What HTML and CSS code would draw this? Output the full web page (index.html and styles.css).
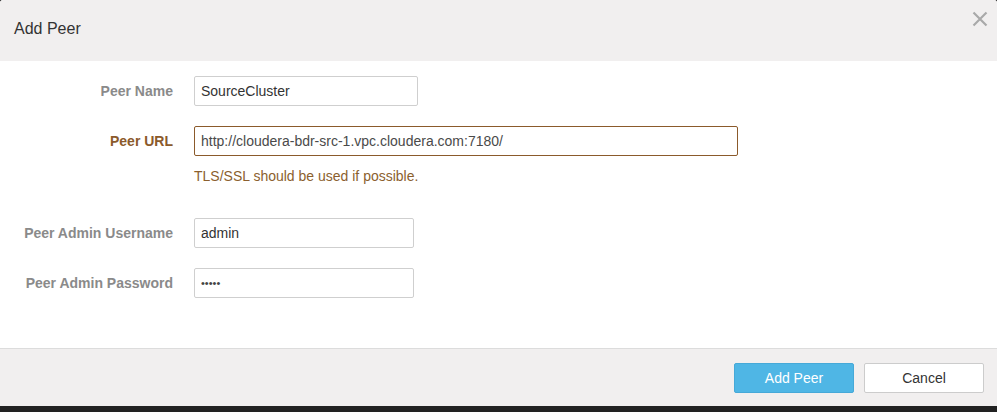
FILE: index.html
```html
<!DOCTYPE html>
<html>
<head>
<meta charset="utf-8">
<link rel="stylesheet" href="styles.css">
</head>
<body>
<div class="modal">
  <div class="modal-header">
    <h3 class="title">Add Peer</h3>
    <button class="close" aria-label="Close">
      <svg width="16" height="16" viewBox="0 0 16 16"><path d="M1.5 1.5 L14.5 14.5 M14.5 1.5 L1.5 14.5" stroke="#a9a9a9" stroke-width="2.2" fill="none"/></svg>
    </button>
  </div>
  <div class="modal-body">
    <div class="row">
      <label class="label">Peer Name</label>
      <div class="control"><input class="input w224" type="text" value="SourceCluster"></div>
    </div>
    <div class="row warn">
      <label class="label">Peer URL</label>
      <div class="control"><input class="input w544" type="text" value="http://cloudera-bdr-src-1.vpc.cloudera.com:7180/"></div>
    </div>
    <div class="help">TLS/SSL should be used if possible.</div>
    <div class="row gap-lg">
      <label class="label">Peer Admin Username</label>
      <div class="control"><input class="input w220" type="text" value="admin"></div>
    </div>
    <div class="row">
      <label class="label">Peer Admin Password</label>
      <div class="control"><input class="input w220 pw" type="password" value="admin"></div>
    </div>
  </div>
  <div class="modal-footer">
    <button class="btn btn-primary">Add Peer</button>
    <button class="btn btn-default">Cancel</button>
  </div>
</div>
</body>
</html>
```
FILE: styles.css
```css
html, body {
  margin: 0;
  padding: 0;
  background: #222;
  font-family: "Liberation Sans", Arial, sans-serif;
}
.modal {
  width: 997px;
  height: 406px;
  background: #fff;
  border-radius: 3px 3px 0 0;
  overflow: hidden;
  display: flex;
  flex-direction: column;
}
.modal-header {
  height: 61px;
  background: #f1efef;
  display: flex;
  align-items: center;
  justify-content: space-between;
  padding: 0 9px 0 14px;
  box-sizing: border-box;
}
.title {
  margin: 0 0 3px 0;
  font-size: 16px;
  font-weight: normal;
  color: #333;
}
.close {
  border: 0;
  background: none;
  padding: 0;
  margin: 0 0 23px 0;
  width: 16px;
  height: 16px;
  display: flex;
}
.modal-body {
  flex: 0 0 288px;
  padding-top: 15px;
  box-sizing: border-box;
  border-bottom: 1px solid #dcdcdc;
}
.row {
  display: grid;
  grid-template-columns: 173px auto;
  column-gap: 21px;
  align-items: center;
  margin-bottom: 20px;
}
.row.warn { margin-bottom: 10px; }
.row.gap-lg { margin-top: 32px; }
.label {
  text-align: right;
  font-size: 14px;
  font-weight: bold;
  color: #8a8a8a;
}
.input {
  height: 30px;
  box-sizing: border-box;
  border: 1px solid #cfcfcf;
  border-radius: 2px;
  padding: 0 6px;
  font-family: "Liberation Sans", Arial, sans-serif;
  font-size: 14px;
  color: #333;
  background: #fff;
  display: block;
  outline: none;
}
.w224 { width: 224px; }
.w544 { width: 544px; }
.w220 { width: 220px; }
.pw { font-size: 11px; letter-spacing: 0; color: #444; }
.warn .label { color: #8b5a2b; }
.warn .input { border-color: #8b5a2b; color: #4a4a4a; }
.help {
  margin-left: 194px;
  font-size: 14px;
  line-height: 20px;
  color: #8b5f2e;
}
.modal-footer {
  flex: 1;
  background: #f1efef;
  display: flex;
  justify-content: flex-end;
  align-items: flex-start;
  gap: 10px;
  padding: 14px 13px 0 0;
}
.btn {
  width: 120px;
  height: 30px;
  box-sizing: border-box;
  font-family: "Liberation Sans", Arial, sans-serif;
  font-size: 14px;
  border-radius: 2px;
  padding: 0;
}
.btn-primary {
  background: #4fb6e5;
  border: 1px solid #46a9d8;
  color: #fff;
}
.btn-default {
  background: #fff;
  border: 1px solid #cccccc;
  color: #333;
}
```
